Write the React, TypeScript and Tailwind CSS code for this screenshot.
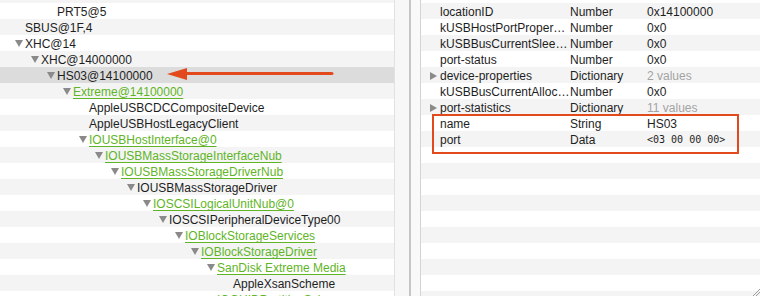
import React from 'react';

type TreeRow = {
  label: string;
  level: number;
  open?: boolean;
  link?: boolean;
  selected?: boolean;
};

type PropRow = {
  key?: string;
  type?: string;
  value?: string;
  muted?: boolean;
  mono?: boolean;
  toggle?: boolean;
};

const treeRows: TreeRow[] = [
  { label: '', level: 0 },
  { label: 'PRT5@5', level: 2 },
  { label: 'SBUS@1F,4', level: 0 },
  { label: 'XHC@14', level: 0, open: true },
  { label: 'XHC@14000000', level: 1, open: true },
  { label: 'HS03@14100000', level: 2, open: true, selected: true },
  { label: 'Extreme@14100000', level: 3, open: true, link: true },
  { label: 'AppleUSBCDCCompositeDevice', level: 4 },
  { label: 'AppleUSBHostLegacyClient', level: 4 },
  { label: 'IOUSBHostInterface@0', level: 4, open: true, link: true },
  { label: 'IOUSBMassStorageInterfaceNub', level: 5, open: true, link: true },
  { label: 'IOUSBMassStorageDriverNub', level: 6, open: true, link: true },
  { label: 'IOUSBMassStorageDriver', level: 7, open: true },
  { label: 'IOSCSILogicalUnitNub@0', level: 8, open: true, link: true },
  { label: 'IOSCSIPeripheralDeviceType00', level: 9, open: true },
  { label: 'IOBlockStorageServices', level: 10, open: true, link: true },
  { label: 'IOBlockStorageDriver', level: 11, open: true, link: true },
  { label: 'SanDisk Extreme Media', level: 12, open: true, link: true },
  { label: 'AppleXsanScheme', level: 13 },
  { label: 'IOGUIDPartitionScheme', level: 12, open: true, link: true },
];

const propRows: PropRow[] = [
  {},
  { key: 'locationID', type: 'Number', value: '0x14100000' },
  { key: 'kUSBHostPortProper…', type: 'Number', value: '0x0' },
  { key: 'kUSBBusCurrentSlee…', type: 'Number', value: '0x0' },
  { key: 'port-status', type: 'Number', value: '0x0' },
  { key: 'device-properties', type: 'Dictionary', value: '2 values', muted: true, toggle: true },
  { key: 'kUSBBusCurrentAlloc…', type: 'Number', value: '0x0' },
  { key: 'port-statistics', type: 'Dictionary', value: '11 values', muted: true, toggle: true },
  { key: 'name', type: 'String', value: 'HS03' },
  { key: 'port', type: 'Data', value: '<03 00 00 00>', mono: true },
  {}, {}, {}, {}, {}, {}, {}, {}, {}, {},
];

const DownTriangle = () => (
  <svg width="8" height="7" viewBox="0 0 8 7">
    <polygon points="0,0 8,0 4,7" fill="#8a8a8a" />
  </svg>
);

const RightTriangle = () => (
  <svg width="7" height="8" viewBox="0 0 7 8">
    <polygon points="0,0 7,4 0,8" fill="#8a8a8a" />
  </svg>
);

const App = () => {
  return (
    <div className="relative flex w-[760px] h-[296px] overflow-hidden bg-white font-['Liberation_Sans',Arial,sans-serif] text-[12px] text-[#1e1e1e]">
      {/* IORegistry tree */}
      <div className="w-[394px] shrink-0 flex flex-col -mt-[13px]">
        {treeRows.map((row, i) => (
          <div
            key={i}
            className={`flex items-center h-[16px] shrink-0 leading-[14px] pt-[2px] ${
              row.selected ? 'bg-[#dcdcdc]' : i % 2 === 0 ? 'bg-[#f4f4f4]' : 'bg-white'
            }`}
            style={{ paddingLeft: 15 + row.level * 16 }}
          >
            <span className="w-[10px] flex items-center shrink-0 -mt-[1px]">
              {row.open && <DownTriangle />}
            </span>
            <span
              className={`whitespace-nowrap ${
                row.link ? 'text-[#5fb526] underline underline-offset-[2px]' : ''
              }`}
            >
              {row.label}
            </span>
          </div>
        ))}
      </div>

      {/* Split view divider */}
      <div className="w-[27px] shrink-0 flex">
        <div className="w-[1px] bg-[#e2e2e2]" />
        <div className="w-[14px] bg-[#f7f7f7]" />
        <div className="w-[2px] bg-[#c6c6c6]" />
        <div className="w-[9px] bg-[#f9f9f9]" />
        <div className="w-[1px] bg-[#d3d3d3]" />
      </div>

      {/* Property table */}
      <div className="flex-1 flex flex-col -mt-[13px]">
        {propRows.map((row, i) => (
          <div
            key={i}
            className={`flex items-center h-[16px] shrink-0 leading-[14px] pt-[2px] pl-[9px] ${
              i % 2 === 1 ? 'bg-[#f4f4f4]' : 'bg-white'
            }`}
          >
            <span className="w-[10px] flex items-center shrink-0 -mt-[1px]">
              {row.toggle && <RightTriangle />}
            </span>
            <span className="w-[130px] shrink-0 whitespace-nowrap overflow-hidden">{row.key}</span>
            <span className="w-[77px] shrink-0 whitespace-nowrap">{row.type}</span>
            <span
              className={`whitespace-nowrap ${row.muted ? 'text-[#a3a3a3]' : ''} ${
                row.mono ? "font-['DejaVu_Sans_Mono',monospace] text-[10px]" : ''
              }`}
            >
              {row.value}
            </span>
          </div>
        ))}
      </div>

      {/* Annotation arrow */}
      <svg className="absolute left-[164px] top-[66px]" width="172" height="16" viewBox="0 0 172 16">
        <line x1="18" y1="7.5" x2="168" y2="7.5" stroke="#e2491d" strokeWidth="3" strokeLinecap="round" />
        <polygon points="3,8 23,2 23,14" fill="#e2491d" />
      </svg>

      {/* Annotation box */}
      <div className="absolute left-[432px] top-[114px] w-[307px] h-[40px] border-2 border-[#e2491d]" />

      {/* Resize grip */}
      <svg className="absolute right-0 bottom-0" width="9" height="9" viewBox="0 0 9 9">
        <line x1="9" y1="2" x2="2" y2="9" stroke="#9a9a9a" strokeWidth="1" />
        <line x1="9" y1="5" x2="5" y2="9" stroke="#9a9a9a" strokeWidth="1" />
      </svg>
    </div>
  );
};

export default App;
